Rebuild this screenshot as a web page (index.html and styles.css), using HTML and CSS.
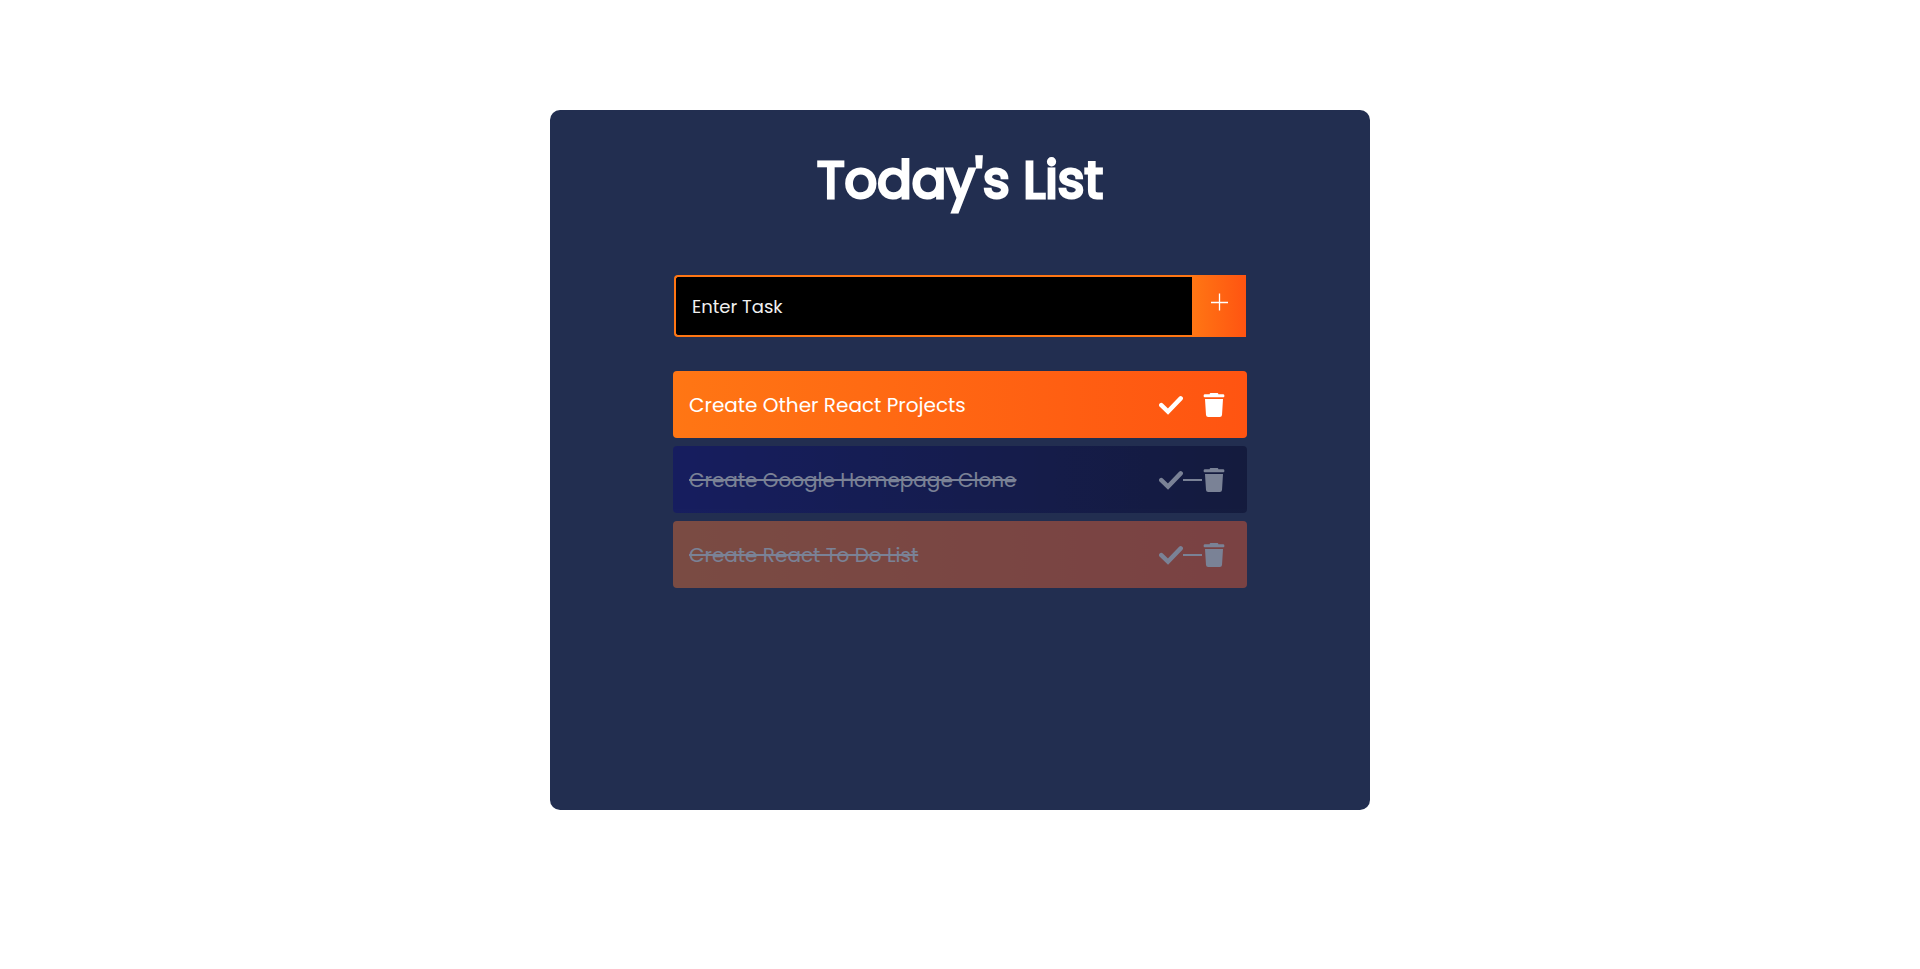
FILE: index.html
```html
<!DOCTYPE html>
<html lang="en">
<head>
<meta charset="utf-8">
<meta name="viewport" content="width=device-width, initial-scale=1">
<title>Today's List</title>
<link rel="stylesheet" href="styles.css">
</head>
<body>
<svg class="sprite" aria-hidden="true">
  <symbol id="check" viewBox="0 0 24 24"><path d="M2.300 12.100 9 18.600 21.700 5.400" fill="none" stroke="currentColor" stroke-width="4.400" stroke-linecap="round" stroke-linejoin="miter"/></symbol>
  <symbol id="trash" viewBox="0 0 24 24"><path d="M8.600 0h6.800q.8 0 1 1.300h5q1 0 1 1.500t-1 1.500H2.600q-1 0-1-1.500t1-1.500h5q.2-1.300 1-1.300ZM3 6h18l-1 16q-.2 2-2.200 2H6.200q-2 0-2.200-2Z" fill="currentColor"/></symbol>
</svg>
<main class="todo">
  <h1 class="todo-title">Today's List</h1>
  <form class="todo-form">
    <input class="todo-input" type="text" placeholder="Enter Task" aria-label="Enter Task">
    <button class="todo-add" type="button" aria-label="Add task"><svg width="18" height="18" viewBox="0 0 18 18"><path d="M9.500 .5v17M1 9.500h17" fill="none" stroke="currentColor" stroke-width="1.300"/></svg></button>
  </form>
  <ul class="todo-list">
    <li class="task">
      <span class="task-text">Create Other React Projects</span>
      <span class="task-actions">
        <button class="icon-button" type="button" aria-label="Complete task"><svg class="icon"><use href="#check"/></svg></button>
        <span class="joint"></span>
        <button class="icon-button" type="button" aria-label="Delete task"><svg class="icon"><use href="#trash"/></svg></button>
      </span>
    </li>
    <li class="task task-blue done">
      <span class="task-text">Create Google Homepage Clone</span>
      <span class="task-actions">
        <button class="icon-button" type="button" aria-label="Complete task"><svg class="icon"><use href="#check"/></svg></button>
        <span class="joint"></span>
        <button class="icon-button" type="button" aria-label="Delete task"><svg class="icon"><use href="#trash"/></svg></button>
      </span>
    </li>
    <li class="task task-coral done">
      <span class="task-text">Create React To Do List</span>
      <span class="task-actions">
        <button class="icon-button" type="button" aria-label="Complete task"><svg class="icon"><use href="#check"/></svg></button>
        <span class="joint"></span>
        <button class="icon-button" type="button" aria-label="Delete task"><svg class="icon"><use href="#trash"/></svg></button>
      </span>
    </li>
  </ul>
</main>
</body>
</html>
```
FILE: styles.css
```css
* { box-sizing: border-box; }
body {
  margin: 0;
  background: #fff;
  color: #fff;
  font-family: Poppins, Inter, "Open Sans", sans-serif;
}
.sprite { position: absolute; width: 0; height: 0; }
.todo {
  width: calc(100% - 32px);
  max-width: 820px;
  min-height: 700px;
  margin: 110px auto;
  padding: 32px 0;
  border-radius: 10px;
  background: #222e50;
}
.todo-title {
  margin: 0;
  font-size: 51px;
  line-height: 76px;
  font-weight: 400;
  -webkit-text-stroke: 3px #fff;
  text-align: center;
}
.todo-form {
  display: flex;
  width: 70%;
  height: 62px;
  margin: 57px auto 34px;
  padding: 0 1px;
}
.todo-input {
  flex: 1;
  min-width: 0;
  padding: 0 16px;
  border: 2px solid #ff7614;
  border-right: 0;
  border-radius: 4px 0 0 4px;
  background: #000;
  color: #fff;
  font: inherit;
  font-size: 18px;
}
.todo-input::placeholder { color: #f0f0f0; opacity: 1; }
.todo-add {
  width: 54px;
  padding: 0 0 8px;
  border: 0;
  background: linear-gradient(90deg, #ff7614, #ff5411);
  color: #fff;
}
.todo-add svg { display: block; margin: 0 auto; }
.todo-list {
  display: grid;
  gap: 8px;
  width: 70%;
  margin: 0 auto;
  padding: 0;
  list-style: none;
}
.task {
  display: flex;
  align-items: center;
  justify-content: space-between;
  min-height: 67px;
  padding: 0 21px 0 16px;
  border-radius: 4px;
  background: linear-gradient(90deg, #ff7614, #ff5411);
  font-size: 20px;
  line-height: 30px;
}
.task-blue { background: linear-gradient(90deg, #060676, #000023); }
.task-coral { background: linear-gradient(90deg, #ff7830, #ff6032); }
.done { opacity: .4; }
.done .task-text { text-decoration: line-through 2px; }
.task-actions { display: flex; align-items: center; }
.icon-button {
  padding: 0;
  border: 0;
  background: none;
  color: inherit;
}
.icon { display: block; width: 24px; height: 24px; }
.joint { width: 19px; height: 2px; }
.done .joint { background: #fff; }
```
